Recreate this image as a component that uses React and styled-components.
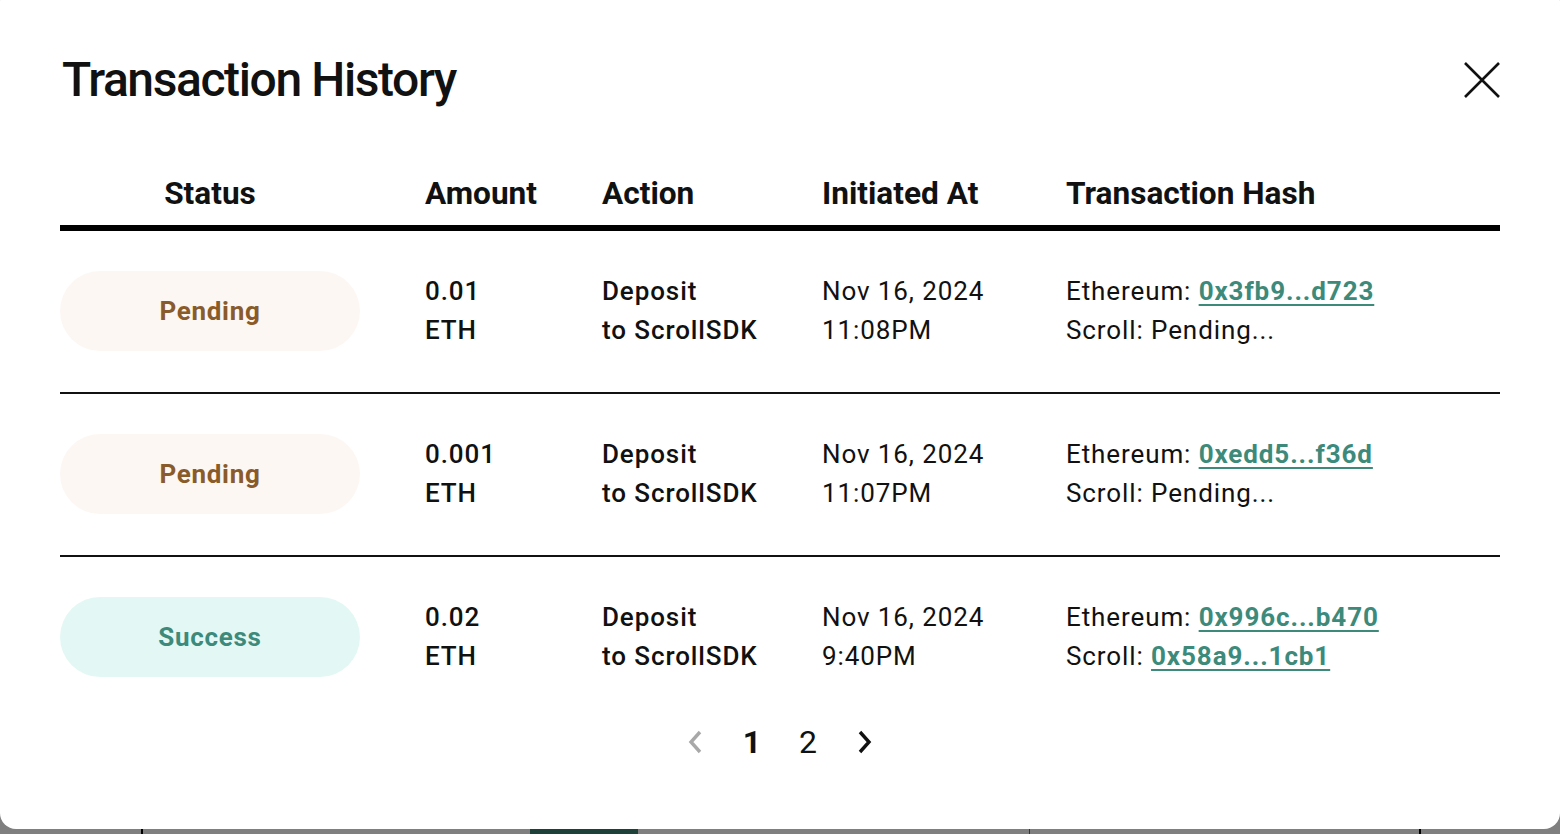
import React from "react";
import styled, { createGlobalStyle } from "styled-components";

const rows = [
  {
    status: "pending",
    amount: "0.01",
    date: "Nov 16, 2024",
    time: "11:08PM",
    eth: "0x3fb9...d723",
    scroll: null,
  },
  {
    status: "pending",
    amount: "0.001",
    date: "Nov 16, 2024",
    time: "11:07PM",
    eth: "0xedd5...f36d",
    scroll: null,
  },
  {
    status: "success",
    amount: "0.02",
    date: "Nov 16, 2024",
    time: "9:40PM",
    eth: "0x996c...b470",
    scroll: "0x58a9...1cb1",
  },
];

const pillColors = {
  pending: { bg: "#fcf7f3", fg: "#8a5b2a" },
  success: { bg: "#e3f8f4", fg: "#3d8a7b" },
};

const CloseIcon = () => (
  <svg width="38" height="38" viewBox="0 0 38 38" fill="none">
    <path d="M2 2L36 36M36 2L2 36" stroke="#111" strokeWidth="2.6" />
  </svg>
);

const Chevron = ({ dir, color }) => (
  <svg width="16" height="26" viewBox="0 0 16 26" fill="none">
    <path
      d={dir === "left" ? "M12 3L3 13l9 10" : "M4 3l9 10-9 10"}
      stroke={color}
      strokeWidth="3.4"
    />
  </svg>
);

const App = () => {
  return (
    <>
      <GlobalStyle />
      <Backdrop>
        <Modal>
          <TitleBar>
            <Title>Transaction History</Title>
            <CloseButton aria-label="close">
              <CloseIcon />
            </CloseButton>
          </TitleBar>

          <Table>
            <HeadRow>
              <HeadCell center>Status</HeadCell>
              <HeadCell>Amount</HeadCell>
              <HeadCell>Action</HeadCell>
              <HeadCell>Initiated At</HeadCell>
              <HeadCell>Transaction Hash</HeadCell>
            </HeadRow>

            {rows.map((r, i) => (
              <Row key={i} last={i === rows.length - 1}>
                <Pill kind={r.status}>
                  {r.status === "success" ? "Success" : "Pending"}
                </Pill>
                <Cell strong>
                  {r.amount}
                  <br />
                  ETH
                </Cell>
                <Cell strong>
                  Deposit
                  <br />
                  to ScrollSDK
                </Cell>
                <Cell>
                  {r.date}
                  <br />
                  {r.time}
                </Cell>
                <Cell>
                  Ethereum: <HashLink href="#">{r.eth}</HashLink>
                  <br />
                  Scroll:{" "}
                  {r.scroll ? <HashLink href="#">{r.scroll}</HashLink> : "Pending..."}
                </Cell>
              </Row>
            ))}
          </Table>

          <Pager>
            <PageArrow>
              <Chevron dir="left" color="#a8a8a8" />
            </PageArrow>
            <PageNum active>1</PageNum>
            <PageNum>2</PageNum>
            <PageArrow>
              <Chevron dir="right" color="#111" />
            </PageArrow>
          </Pager>
        </Modal>

        <PageStrip>
          <StripCell w={141} />
          <StripCell w={389} line />
          <StripCell w={108} green />
          <StripCell w={391} />
          <StripCell w={390} thin />
          <StripCell w={141} line />
        </PageStrip>
      </Backdrop>
    </>
  );
};
export default App;

const GlobalStyle = createGlobalStyle`
  html, body {
    margin: 0;
    padding: 0;
    overflow: hidden;
    background: #7f7f7f;
  }
  * {
    box-sizing: border-box;
  }
`;

const Backdrop = styled.div`
  width: 1560px;
  height: 834px;
  overflow: hidden;
  background: #7f7f7f;
  display: flex;
  flex-direction: column;
`;

const Modal = styled.div`
  margin-top: -14px;
  width: 1560px;
  background: #fff;
  border-radius: 16px;
  padding: 66px 60px 63px 60px;
  font-family: Roboto, "Liberation Sans", sans-serif;
  color: #111;
  flex-shrink: 0;
`;

const TitleBar = styled.div`
  display: flex;
  align-items: center;
  justify-content: space-between;
`;

const Title = styled.h1`
  margin: 0 0 0 2px;
  font-size: 48px;
  line-height: 56px;
  font-weight: 500;
  letter-spacing: -1.4px;
  color: #111;
`;

const CloseButton = styled.button`
  border: none;
  background: none;
  padding: 0;
  margin-right: -1px;
  display: flex;
  cursor: pointer;
`;

const Table = styled.div`
  margin-top: 66px;
  display: flex;
  flex-direction: column;
`;

const grid = `
  display: grid;
  grid-template-columns: 365px 177px 220px 244px 1fr;
  align-items: center;
`;

const HeadRow = styled.div`
  ${grid}
  padding-bottom: 11px;
  border-bottom: 6px solid #000;
`;

const HeadCell = styled.div`
  font-size: 31.6px;
  line-height: 40px;
  font-weight: 700;
  color: #111;
  width: ${(p) => (p.center ? "300px" : "auto")};
  text-align: ${(p) => (p.center ? "center" : "left")};
`;

const Row = styled.div`
  ${grid}
  padding: 40px 0 41px;
  border-bottom: ${(p) => (p.last ? "none" : "2px solid #111")};
`;

const Pill = styled.div`
  width: 300px;
  height: 80px;
  border-radius: 40px;
  display: flex;
  align-items: center;
  justify-content: center;
  background: ${(p) => pillColors[p.kind].bg};
  color: ${(p) => pillColors[p.kind].fg};
  font-size: 26px;
  font-weight: 700;
  letter-spacing: 0.7px;
`;

const Cell = styled.div`
  font-size: 26px;
  line-height: 39px;
  letter-spacing: 0.9px;
  font-weight: ${(p) => (p.strong ? 500 : 400)};
  color: #111;
  white-space: nowrap;
`;

const HashLink = styled.a`
  color: #3d8a7b;
  font-weight: 700;
  text-decoration: underline;
  text-decoration-thickness: 2px;
  text-underline-offset: 4px;
`;

const Pager = styled.div`
  height: 48px;
  display: flex;
  align-items: center;
  justify-content: center;
  gap: 30px;
`;

const PageArrow = styled.span`
  width: 26px;
  display: flex;
  justify-content: center;
`;

const PageNum = styled.span`
  width: 26px;
  text-align: center;
  font-size: 32px;
  font-weight: ${(p) => (p.active ? 700 : 400)};
  color: #111;
`;

const PageStrip = styled.div`
  display: flex;
  flex: 1;
`;

const StripCell = styled.div`
  width: ${(p) => p.w}px;
  flex-shrink: 0;
  background: ${(p) => (p.green ? "#1d4139" : "transparent")};
  border-left: ${(p) =>
    p.line ? "2px solid #000" : p.thin ? "1px solid #1d4139" : "none"};
`;
